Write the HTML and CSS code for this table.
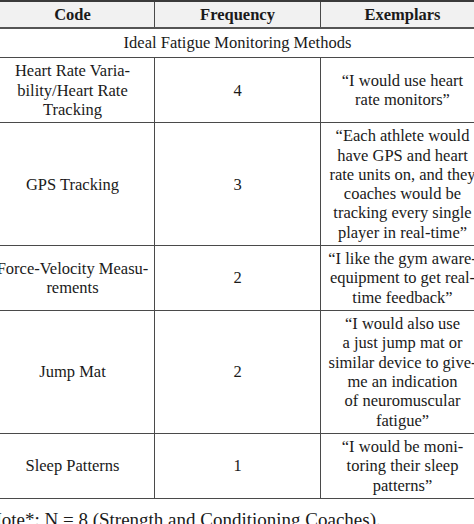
FILE: index.html
```html
<!DOCTYPE html>
<html>
<head>
<meta charset="utf-8">
<link rel="stylesheet" href="styles.css">
</head>
<body>
<div class="page">
<table class="tbl">
  <colgroup><col class="c1"><col class="c2"><col class="c3"></colgroup>
  <thead>
    <tr class="head"><th>Code</th><th>Frequency</th><th>Exemplars</th></tr>
  </thead>
  <tbody>
    <tr class="section"><td colspan="3">Ideal Fatigue Monitoring Methods</td></tr>
    <tr class="r3"><td>Heart Rate Varia-<br>bility/Heart Rate<br>Tracking</td><td>4</td><td>“I would use heart<br>rate monitors”</td></tr>
    <tr class="r6"><td>GPS Tracking</td><td>3</td><td>“Each athlete would<br>have GPS and heart<br>rate units on, and they<br>coaches would be<br>tracking every single<br>player in real-time”</td></tr>
    <tr class="r3"><td>Force-Velocity Measu-<br>rements</td><td>2</td><td>“I like the gym aware-<br>equipment to get real-<br>time feedback”</td></tr>
    <tr class="r6"><td>Jump Mat</td><td>2</td><td>“I would also use<br>a just jump mat or<br>similar device to give-<br>me an indication<br>of neuromuscular<br>fatigue”</td></tr>
    <tr class="r3"><td>Sleep Patterns</td><td>1</td><td>“I would be moni-<br>toring their sleep<br>patterns”</td></tr>
  </tbody>
</table>
<p class="note">Note*: N = 8 (Strength and Conditioning Coaches).</p>
</div>
</body>
</html>
```
FILE: styles.css
```css
html, body { margin: 0; padding: 0; background: #fff; }
body { overflow: hidden; width: 474px; height: 524px; }
.page { width: 474px; overflow: hidden; }
.tbl {
  margin-left: -10px;
  width: 494px;
  table-layout: fixed;
  border-collapse: collapse;
  font-family: "Liberation Serif", "DejaVu Serif", serif;
  font-size: 16.5px;
  line-height: 19.3px;
  color: #1a1a1a;
  border-top: 2px solid #3a3a3a;
}
.c1 { width: 164px; }
.c2 { width: 166px; }
.c3 { width: 164px; }
.tbl th, .tbl td {
  text-align: center;
  vertical-align: middle;
  border: 1px solid #4a4a4a;
  padding: 3px 2px;
  white-space: nowrap;
  overflow: visible;
}
.head th {
  background: #f1f1f1;
  font-weight: bold;
  height: 17px;
  padding: 3px 2px 3px;
  border-bottom: 2px solid #555;
}
.section td { height: 21px; padding: 3px 2px 4px; }
.r3 td { height: 58px; }
.r6 td { height: 112px; }
.note {
  margin: 9px 0 0 -12px;
  font-family: "Liberation Serif", serif;
  font-size: 19px;
  line-height: 24px;
  color: #1a1a1a;
  white-space: nowrap;
}
```
